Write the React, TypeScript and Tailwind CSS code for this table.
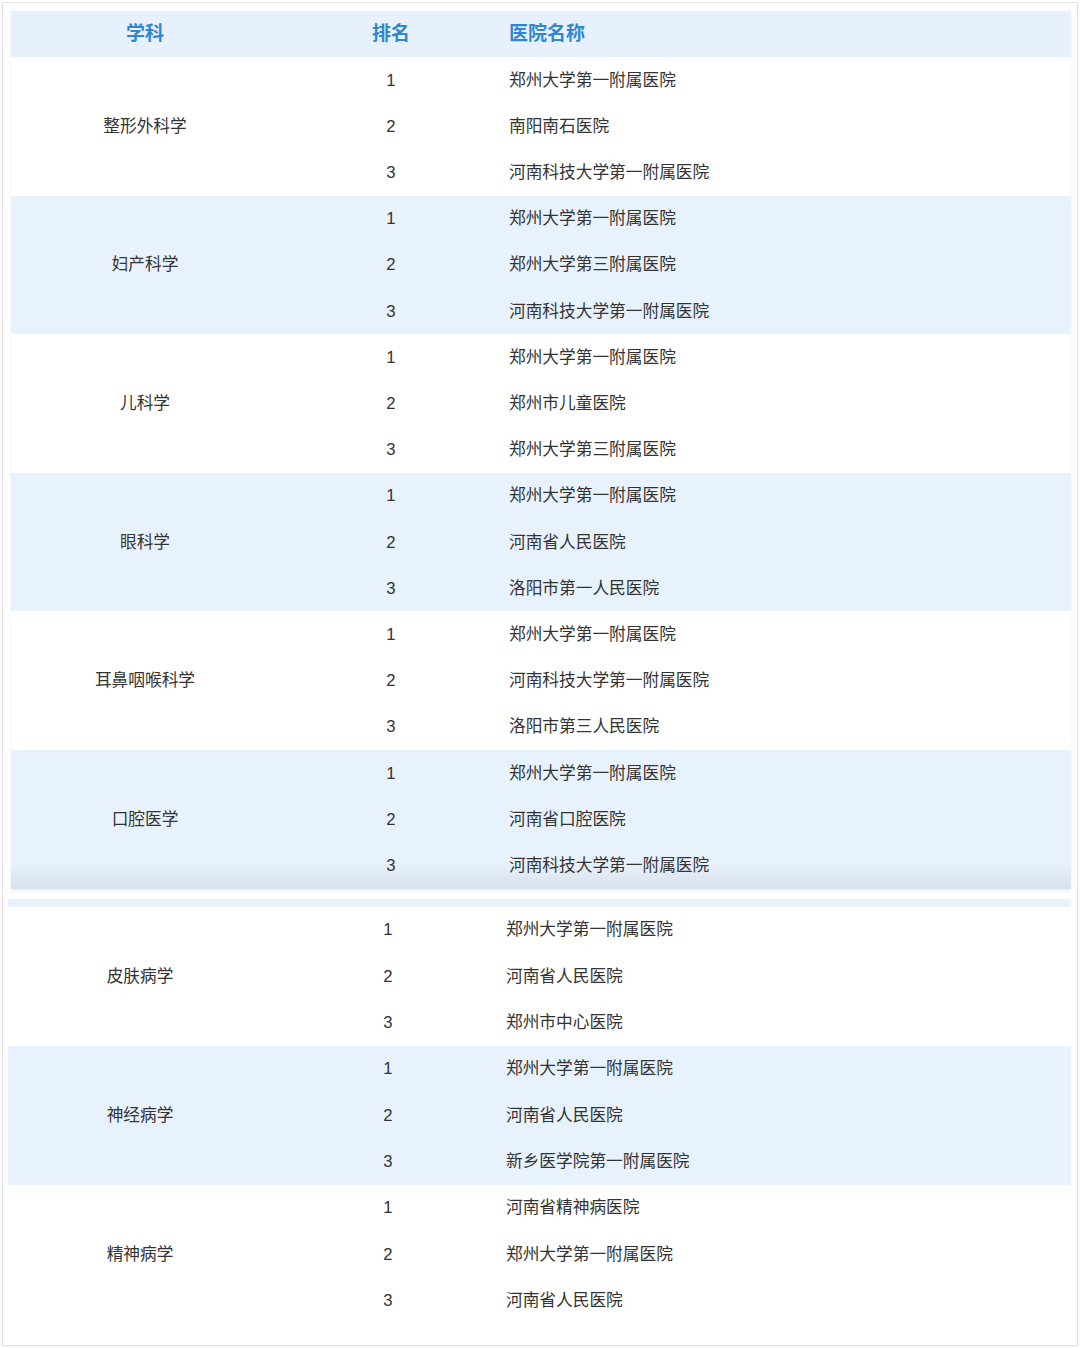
type Group = { subject: string; hospitals: string[] };

const top: Group[] = [
  { subject: "整形外科学", hospitals: ["郑州大学第一附属医院", "南阳南石医院", "河南科技大学第一附属医院"] },
  { subject: "妇产科学", hospitals: ["郑州大学第一附属医院", "郑州大学第三附属医院", "河南科技大学第一附属医院"] },
  { subject: "儿科学", hospitals: ["郑州大学第一附属医院", "郑州市儿童医院", "郑州大学第三附属医院"] },
  { subject: "眼科学", hospitals: ["郑州大学第一附属医院", "河南省人民医院", "洛阳市第一人民医院"] },
  { subject: "耳鼻咽喉科学", hospitals: ["郑州大学第一附属医院", "河南科技大学第一附属医院", "洛阳市第三人民医院"] },
  { subject: "口腔医学", hospitals: ["郑州大学第一附属医院", "河南省口腔医院", "河南科技大学第一附属医院"] },
];

const bottom: Group[] = [
  { subject: "皮肤病学", hospitals: ["郑州大学第一附属医院", "河南省人民医院", "郑州市中心医院"] },
  { subject: "神经病学", hospitals: ["郑州大学第一附属医院", "河南省人民医院", "新乡医学院第一附属医院"] },
  { subject: "精神病学", hospitals: ["河南省精神病医院", "郑州大学第一附属医院", "河南省人民医院"] },
];

const font = { fontFamily: '"Liberation Sans", "Noto Sans CJK SC", sans-serif' };

function GroupRows({ g, blue, last, h, subjW, rankW, pad }: { g: Group; blue: boolean; last?: boolean; h: string; subjW: string; rankW: string; pad: string }) {
  return (
    <div className={`relative flex ${h} ${blue ? "bg-[#e8f2fd]" : "bg-white"}`}>
      {last && <div className="absolute inset-x-0 bottom-0 h-[26px] bg-gradient-to-b from-transparent to-[#d8e0ea]" />}
      <div className={`relative flex ${subjW} shrink-0 items-center justify-center`}>{g.subject}</div>
      <div className="relative flex flex-1 flex-col">
        {g.hospitals.map((name, i) => (
          <div key={i} className="flex flex-1 items-center">
            <div className={`${rankW} shrink-0 text-center`}>{i + 1}</div>
            <div className={pad}>{name}</div>
          </div>
        ))}
      </div>
    </div>
  );
}

export default function App() {
  return (
    <div className="h-[1348px] bg-white p-[2px] text-[16.7px] text-[#333]" style={font}>
      <div className="h-[1344px] border border-[#e2e2e2] shadow-[0_1px_2px_rgba(0,0,0,0.06)]">
        <div className="ml-[8px] mr-[6px] mt-[8px] shadow-[0_2px_3px_rgba(0,0,0,0.07)]">
          <div className="flex h-[46px] items-center bg-[#e6f1fd] text-[19px] font-bold text-[#2f86d1]">
            <div className="w-[268px] shrink-0 text-center">学科</div>
            <div className="w-[224px] shrink-0 text-center">排名</div>
            <div className="pl-[6px]">医院名称</div>
          </div>
          {top.map((g, i) => (
            <GroupRows key={g.subject} g={g} blue={i % 2 === 1} last={i === top.length - 1} h="h-[138.6px]" subjW="w-[268px]" rankW="w-[224px]" pad="pl-[6px]" />
          ))}
        </div>
        <div className="ml-[5px] mr-[6px] mt-[10px]">
          <div className="h-[8px] bg-[#e8f2fd]" />
          {bottom.map((g, i) => (
            <GroupRows key={g.subject} g={g} blue={i % 2 === 1} h="h-[139px]" subjW="w-[264px]" rankW="w-[232px]" pad="pl-[2px]" />
          ))}
        </div>
      </div>
    </div>
  );
}
